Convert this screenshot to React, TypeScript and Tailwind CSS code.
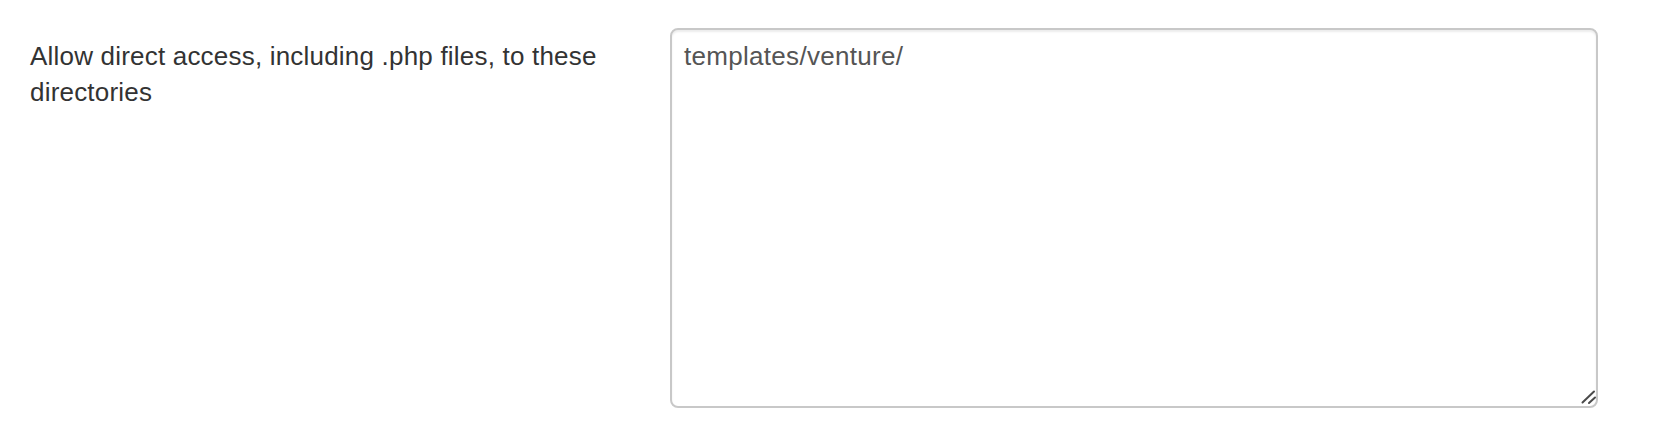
import React, { useState } from 'react';

const ResizeGrip: React.FC = () => (
  <svg
    width="16"
    height="16"
    viewBox="0 0 16 16"
    className="pointer-events-none absolute right-[1px] bottom-[2px]"
  >
    <path d="M1.5 12.5 L13 1.5 M8 13 L14 7.5" stroke="#4a4a4a" strokeWidth="2" strokeLinecap="round" fill="none" />
  </svg>
);

const App: React.FC = () => {
  const [dirs, setDirs] = useState('templates/venture/');

  return (
    <div className="min-h-[448px] bg-white px-[30px] pt-[28px] font-['Liberation_Sans',Arial,sans-serif]">
      {/* Form row */}
      <div className="flex items-start">
        <label
          htmlFor="allowed-dirs"
          className="w-[640px] shrink-0 pt-[10px] pr-[40px] text-[26px] leading-[36px] tracking-[0.2px] text-[#333333]"
        >
          Allow direct access, including .php files, to these directories
        </label>
        <div className="relative">
          <textarea
            id="allowed-dirs"
            value={dirs}
            onChange={(e) => setDirs(e.target.value)}
            className="block h-[380px] w-[928px] resize-none rounded-[8px] border-2 border-[#c8c8c8] bg-white px-[12px] py-[8px] text-[26px] leading-[36px] tracking-[0.3px] text-[#555555] shadow-[inset_0_2px_2px_rgba(0,0,0,0.075)] outline-none"
          />
          <ResizeGrip />
        </div>
      </div>
    </div>
  );
};

export default App;
